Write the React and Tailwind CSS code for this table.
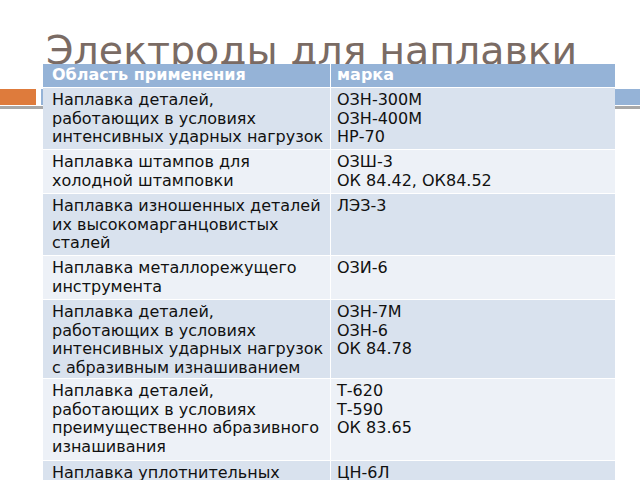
import React from "react";

const rows = [
  {
    h: "h-[61px]",
    area: ["Наплавка деталей,", "работающих в условиях", "интенсивных ударных нагрузок"],
    marks: ["ОЗН-300М", "ОЗН-400М", "НР-70"],
  },
  {
    h: "h-[43px]",
    area: ["Наплавка штампов для", "холодной штамповки"],
    marks: ["ОЗШ-3", "ОК 84.42, ОК84.52"],
  },
  {
    h: "h-[61px]",
    area: ["Наплавка изношенных деталей", "их высокомарганцовистых", "сталей"],
    marks: ["ЛЭЗ-3"],
  },
  {
    h: "h-[43px]",
    area: ["Наплавка металлорежущего", "инструмента"],
    marks: ["ОЗИ-6"],
  },
  {
    h: "h-[78px]",
    area: [
      "Наплавка деталей,",
      "работающих в условиях",
      "интенсивных ударных нагрузок",
      "с абразивным изнашиванием",
    ],
    marks: ["ОЗН-7М", "ОЗН-6", "ОК 84.78"],
  },
  {
    h: "h-[81px]",
    area: [
      "Наплавка деталей,",
      "работающих в условиях",
      "преимущественно абразивного",
      "изнашивания",
    ],
    marks: ["Т-620", "Т-590", "ОК 83.65"],
  },
  {
    h: "h-[61px]",
    area: ["Наплавка уплотнительных", "поверхностей арматуры"],
    marks: ["ЦН-6Л"],
  },
];

const Lines = ({ items }) => (
  <>
    {items.map((t, i) => (
      <div key={i} className="whitespace-nowrap">
        {t}
      </div>
    ))}
  </>
);

export default function App() {
  return (
    <div
      className="relative w-[640px] h-[480px] overflow-hidden bg-white"
      style={{ fontFamily: '"DejaVu Sans", sans-serif' }}
    >
      {/* slide template decoration */}
      <div className="absolute top-[89px] left-0 w-[36px] h-[16px] bg-[#de7b3c]" />
      <div className="absolute top-[89px] left-[41px] right-0 h-[16px] bg-[#95b3d7]" />
      <div className="absolute top-[106px] left-0 right-0 h-[3px] bg-[#a8a8a8]" />

      {/* title */}
      <div className="h-[64px] pt-[31px] pl-[46px]">
        <h1 className="text-[39.5px] leading-none font-normal text-[#7a6b64] whitespace-nowrap">
          Электроды для наплавки
        </h1>
      </div>

      {/* table */}
      <div className="relative ml-[43px] w-[572px] grid grid-cols-[287px_284px] gap-px bg-white text-[16px] leading-[18.5px] text-[#111]">
        <div className="bg-[#95b3d7] h-[23px] flex items-center px-[9px] font-bold text-white whitespace-nowrap">
          Область применения
        </div>
        <div className="bg-[#95b3d7] h-[23px] flex items-center px-[6px] font-bold text-white">
          марка
        </div>
        {rows.map((r, i) => {
          const bg = i % 2 === 0 ? "bg-[#d9e2ee]" : "bg-[#edf1f7]";
          return (
            <React.Fragment key={i}>
              <div className={`${bg} ${r.h} pt-[3px] pl-[9px] overflow-hidden`}>
                <Lines items={r.area} />
              </div>
              <div className={`${bg} ${r.h} pt-[3px] pl-[6px] overflow-hidden`}>
                <Lines items={r.marks} />
              </div>
            </React.Fragment>
          );
        })}
      </div>
    </div>
  );
}
